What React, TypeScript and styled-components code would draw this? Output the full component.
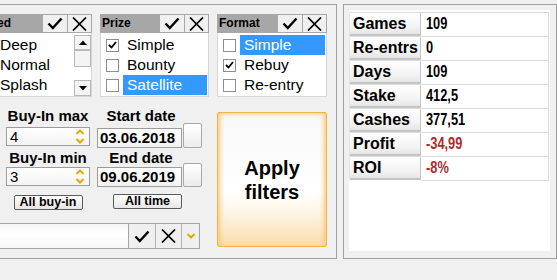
import React from "react";
import styled, { createGlobalStyle } from "styled-components";

const GlobalStyle = createGlobalStyle`
  html, body { margin: 0; padding: 0; background: #f0f0f0; overflow: hidden; }
  body { font-family: "Liberation Sans", Arial, sans-serif; color: #000; }
  * { box-sizing: border-box; }
`;

const Page = styled.div`
  display: flex;
  align-items: flex-start;
  gap: 6px;
  padding-top: 4px;
  width: 557px;
  height: 280px;
  overflow: hidden;
`;

const LeftGroup = styled.div`
  flex: none;
  margin-left: -36px;
  width: 373px;
  height: 255px;
  border: 1px solid #a0a0a0;
  padding: 9px 8px 0 8px;
  display: flex;
  flex-direction: column;
`;

const PanelsRow = styled.div`
  display: flex;
  gap: 8px;
`;

const Panel = styled.div<{ $w: number }>`
  width: ${(p) => p.$w}px;
  height: 83px;
  display: flex;
  flex-direction: column;
  flex: none;
`;

const PanelHeader = styled.div`
  display: flex;
  height: 19px;
`;

const PanelTitle = styled.div`
  flex: 1;
  background: #a7a7a7;
  font-weight: bold;
  font-size: 12px;
  line-height: 19px;
  padding-left: 2px;
  white-space: nowrap;
  overflow: hidden;
`;

const HeaderButton = styled.div<{ $w: number }>`
  width: ${(p) => p.$w}px;
  background: #f0f0f0;
  border: 1px solid #a8a8a8;
  border-left: none;
  display: flex;
  align-items: center;
  justify-content: center;
  &:first-of-type { border-left: 1px solid #a8a8a8; }
`;

const List = styled.div`
  flex: 1;
  display: flex;
  background: #fff;
  border: 1px solid #d6d6d6;
  border-top: none;
`;

const Items = styled.div`
  flex: 1;
  padding: 2px 1px 0 5px;
  display: flex;
  flex-direction: column;
`;

const Item = styled.div`
  display: flex;
  align-items: center;
  height: 20px;
`;

const Box = styled.div`
  width: 13px;
  height: 13px;
  border: 1px solid #8e8e8e;
  background: #fff;
  margin-right: 4px;
  flex: none;
  display: flex;
  align-items: center;
  justify-content: center;
`;

const ItemLabel = styled.div<{ $sel?: boolean }>`
  flex: 1;
  height: 20px;
  line-height: 20px;
  padding-left: 4px;
  font-size: 15.5px;
  white-space: nowrap;
  background: ${(p) => (p.$sel ? "#3399ff" : "transparent")};
  color: ${(p) => (p.$sel ? "#fff" : "#000")};
`;

const ScrollBar = styled.div`
  width: 17px;
  flex: none;
  display: flex;
  flex-direction: column;
  padding: 2px 0 0 0;
`;

const ScrollBtn = styled.div<{ $h: number; $grow?: boolean }>`
  height: ${(p) => p.$h}px;
  border: 1px solid #b8b8b8;
  background: #f4f4f4;
  display: flex;
  align-items: center;
  justify-content: center;
  margin-bottom: ${(p) => (p.$grow ? "auto" : "0")};
`;

const LowerRow = styled.div`
  display: flex;
  margin-top: 10px;
  gap: 15px;
`;

const LeftLower = styled.div`
  width: 229px;
  display: flex;
  flex-direction: column;
`;

const FieldsRow = styled.div`
  display: flex;
  padding-left: 33px;
  gap: 7px;
`;

const BuyInCol = styled.div`
  width: 84px;
  display: flex;
  flex-direction: column;
  align-items: center;
`;

const DateCol = styled.div`
  width: 105px;
  display: flex;
  flex-direction: column;
`;

const FieldLabel = styled.div<{ $mt?: number; $w?: number }>`
  font-weight: bold;
  font-size: 15px;
  line-height: 17px;
  text-align: center;
  white-space: nowrap;
  margin-top: ${(p) => p.$mt ?? 0}px;
  width: ${(p) => (p.$w ? `${p.$w}px` : "auto")};
`;

const SpinInput = styled.div<{ $mt: number }>`
  width: 84px;
  height: 19px;
  margin-top: ${(p) => p.$mt}px;
  border: 1px solid #9c9c9c;
  background: linear-gradient(#ffffff, #f4f4f4);
  display: flex;
  align-items: center;
  font-size: 15px;
  padding-left: 3px;
`;

const SpinValue = styled.div`
  flex: 1;
`;

const Spinner = styled.div`
  width: 16px;
  height: 17px;
  display: flex;
  flex-direction: column;
  justify-content: space-around;
  align-items: center;
  margin-right: 1px;
`;

const DateRow = styled.div<{ $mt: number }>`
  display: flex;
  gap: 1px;
  margin-top: ${(p) => p.$mt}px;
  align-items: flex-end;
`;

const DateInput = styled.div`
  width: 85px;
  height: 20px;
  border: 1px solid #9c9c9c;
  background: linear-gradient(#ffffff, #f2f2f2);
  font-weight: bold;
  font-size: 15px;
  line-height: 18px;
  padding-left: 2px;
`;

const DateButton = styled.div<{ $h: number }>`
  width: 19px;
  height: ${(p) => p.$h}px;
  border: 1px solid #a8a8a8;
  border-radius: 2px;
  background: linear-gradient(#ffffff, #ececec);
`;

const SmallButton = styled.div<{ $mt: number; $ml?: number }>`
  width: 69px;
  height: 15px;
  margin-top: ${(p) => p.$mt}px;
  margin-left: ${(p) => p.$ml ?? 0}px;
  border: 1px solid #5a5a5a;
  border-radius: 2px;
  background: linear-gradient(#ffffff, #e6e6e6);
  font-weight: bold;
  font-size: 12.5px;
  line-height: 13px;
  text-align: center;
`;

const BottomBar = styled.div`
  margin-top: 13px;
  height: 26px;
  width: 227px;
  display: flex;
  border: 1px solid #a4a4a4;
  background: #f0f0f0;
`;

const BottomText = styled.div`
  flex: 1;
  background: linear-gradient(#f4f4f4, #ffffff 40%, #f6f6f6);
  border-right: 1px solid #a4a4a4;
`;

const BarButton = styled.div<{ $w: number; $last?: boolean }>`
  width: ${(p) => p.$w}px;
  display: flex;
  align-items: center;
  justify-content: center;
  border-right: ${(p) => (p.$last ? "none" : "1px solid #b4b4b4")};
  background: #efefef;
`;

const ApplyButton = styled.div`
  width: 110px;
  height: 135px;
  margin-top: 5px;
  border: 1px solid #f2b445;
  border-radius: 2px;
  background: linear-gradient(to bottom, #f8f8f8 0%, #ffffff 60%, #fdf1dc 80%, #fbdca6 100%);
  box-shadow: inset 5px 0 5px -3px #f8c878, inset -5px 0 5px -3px #f8c878, inset 0 4px 4px -3px #f8d090;
  display: flex;
  align-items: center;
  justify-content: center;
  text-align: center;
  font-weight: bold;
  font-size: 20px;
  line-height: 24px;
`;

const RightGroup = styled.div`
  flex: none;
  width: 214px;
  height: 255px;
  border: 1px solid #a0a0a0;
  padding: 5px 6px 7px 5px;
`;

const StatsArea = styled.div`
  height: 100%;
  background: #fff;
  padding: 2px 1px 0 0;
`;

const StatRow = styled.div`
  display: grid;
  grid-template-columns: 72px 1fr;
  height: 24px;
`;

const StatLabel = styled.div`
  background: linear-gradient(#ffffff, #f3f3f3 60%, #e2e2e2);
  border-top: 1px solid #dedede;
  border-left: 1px solid #e4e4e4;
  box-shadow: inset -1px -2px 0 #c4c4c4;
  font-weight: bold;
  font-size: 16px;
  line-height: 22px;
  padding-left: 3px;
  white-space: nowrap;
`;

const StatValue = styled.div`
  border-top: 1px solid #dadada;
  border-right: 1px solid #dadada;
  border-bottom: 1px solid #dadada;
  margin-bottom: -1px;
  padding-left: 5px;
  line-height: 22px;
`;

const StatValueText = styled.span<{ $neg?: boolean }>`
  display: inline-block;
  transform: scaleX(0.8);
  transform-origin: left center;
  font-weight: bold;
  font-size: 16px;
  color: ${(p) => (p.$neg ? "#b02a2a" : "#000")};
`;

const CheckIcon = () => (
  <svg width="16" height="13" viewBox="0 0 16 13">
    <path d="M1.5 6.5 L5.8 11 L14.5 1.5" fill="none" stroke="#000" strokeWidth="2.4" />
  </svg>
);

const XIcon = () => (
  <svg width="15" height="14" viewBox="0 0 15 14">
    <path d="M1 0.5 L14 13.5 M14 0.5 L1 13.5" fill="none" stroke="#000" strokeWidth="1.7" />
  </svg>
);

const SmallCheck = () => (
  <svg width="9" height="8" viewBox="0 0 9 8">
    <path d="M1 4 L3.5 6.5 L8 1" fill="none" stroke="#000" strokeWidth="1.8" />
  </svg>
);

const Chevron = ({ up }: { up?: boolean }) => (
  <svg width="10" height="6" viewBox="0 0 10 6">
    <polyline
      points={up ? "1.5,5 5,1.5 8.5,5" : "1.5,1 5,4.5 8.5,1"}
      fill="none"
      stroke="#e4a800"
      strokeWidth="2"
    />
  </svg>
);

const Tri = ({ up }: { up?: boolean }) => (
  <svg width="8" height="5" viewBox="0 0 8 5">
    <polygon points={up ? "0,5 4,0.5 8,5" : "0,0 4,4.5 8,0"} fill="#000" />
  </svg>
);

type Opt = { label: string; checked?: boolean; sel?: boolean };

const FilterPanel = ({
  title,
  width,
  options,
  scroll,
}: {
  title: string;
  width: number;
  options: Opt[];
  scroll?: boolean;
}) => (
  <Panel $w={width}>
    <PanelHeader>
      <PanelTitle>{title}</PanelTitle>
      <HeaderButton $w={25}>
        <CheckIcon />
      </HeaderButton>
      <HeaderButton $w={24}>
        <XIcon />
      </HeaderButton>
    </PanelHeader>
    <List>
      <Items>
        {options.map((o) => (
          <Item key={o.label}>
            <Box>{o.checked && <SmallCheck />}</Box>
            <ItemLabel $sel={o.sel}>{o.label}</ItemLabel>
          </Item>
        ))}
      </Items>
      {scroll && (
        <ScrollBar>
          <ScrollBtn $h={15}>
            <Tri up />
          </ScrollBtn>
          <ScrollBtn $h={17} $grow />
          <ScrollBtn $h={16}>
            <Tri />
          </ScrollBtn>
        </ScrollBar>
      )}
    </List>
  </Panel>
);

const stats = [
  { k: "Games", v: "109" },
  { k: "Re-entrs", v: "0" },
  { k: "Days", v: "109" },
  { k: "Stake", v: "412,5" },
  { k: "Cashes", v: "377,51" },
  { k: "Profit", v: "-34,99", neg: true },
  { k: "ROI", v: "-8%", neg: true },
];

export default function App() {
  return (
    <>
      <GlobalStyle />
      <Page>
        <LeftGroup>
          <PanelsRow>
            <FilterPanel
              title="Speed"
              width={119}
              scroll
              options={[{ label: "Deep" }, { label: "Normal" }, { label: "Splash" }]}
            />
            <FilterPanel
              title="Prize"
              width={109}
              options={[
                { label: "Simple", checked: true },
                { label: "Bounty" },
                { label: "Satellite", sel: true },
              ]}
            />
            <FilterPanel
              title="Format"
              width={110}
              options={[
                { label: "Simple", sel: true },
                { label: "Rebuy", checked: true },
                { label: "Re-entry" },
              ]}
            />
          </PanelsRow>
          <LowerRow>
            <LeftLower>
              <FieldsRow>
                <BuyInCol>
                  <FieldLabel>Buy-In max</FieldLabel>
                  <SpinInput $mt={3}>
                    <SpinValue>4</SpinValue>
                    <Spinner>
                      <Chevron up />
                      <Chevron />
                    </Spinner>
                  </SpinInput>
                  <FieldLabel $mt={3}>Buy-In min</FieldLabel>
                  <SpinInput $mt={1}>
                    <SpinValue>3</SpinValue>
                    <Spinner>
                      <Chevron up />
                      <Chevron />
                    </Spinner>
                  </SpinInput>
                  <SmallButton $mt={9}>All buy-in</SmallButton>
                </BuyInCol>
                <DateCol>
                  <FieldLabel $w={88}>Start date</FieldLabel>
                  <DateRow $mt={-1}>
                    <DateInput>03.06.2018</DateInput>
                    <DateButton $h={25} />
                  </DateRow>
                  <FieldLabel $w={88} $mt={1}>End date</FieldLabel>
                  <DateRow $mt={-3}>
                    <DateInput>09.06.2019</DateInput>
                    <DateButton $h={24} />
                  </DateRow>
                  <SmallButton $mt={7} $ml={16}>All time</SmallButton>
                </DateCol>
              </FieldsRow>
              <BottomBar>
                <BottomText />
                <BarButton $w={27}>
                  <CheckIcon />
                </BarButton>
                <BarButton $w={26}>
                  <XIcon />
                </BarButton>
                <BarButton $w={17} $last>
                  <Chevron />
                </BarButton>
              </BottomBar>
            </LeftLower>
            <ApplyButton>
              Apply
              <br />
              filters
            </ApplyButton>
          </LowerRow>
        </LeftGroup>
        <RightGroup>
          <StatsArea>
            {stats.map((s) => (
              <StatRow key={s.k}>
                <StatLabel>{s.k}</StatLabel>
                <StatValue>
                  <StatValueText $neg={s.neg}>{s.v}</StatValueText>
                </StatValue>
              </StatRow>
            ))}
          </StatsArea>
        </RightGroup>
      </Page>
    </>
  );
}
